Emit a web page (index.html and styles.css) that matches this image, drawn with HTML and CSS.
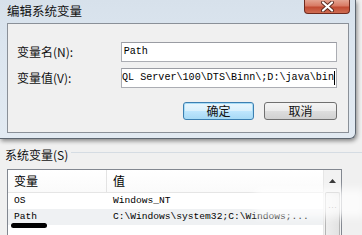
FILE: index.html
```html
<!DOCTYPE html>
<html>
<head>
<meta charset="utf-8">
<link rel="stylesheet" href="styles.css">
</head>
<body>
<div class="dialog">
  <div class="titlebar">
    <span class="title">编辑系统变量</span>
    <span class="close">
      <svg width="15" height="11" viewBox="0 0 15 11"><path d="M3 1.5 L12 9.5 M12 1.5 L3 9.5" stroke="#5a2a20" stroke-width="4" stroke-linecap="round"/><path d="M3 1.5 L12 9.5 M12 1.5 L3 9.5" stroke="#ffffff" stroke-width="2.2" stroke-linecap="round"/></svg>
    </span>
  </div>
  <div class="panel">
    <div class="row">
      <span class="label">变量名(N):</span>
      <div class="input"><span class="val">Path</span></div>
    </div>
    <div class="row">
      <span class="label">变量值(V):</span>
      <div class="input scrolled"><span class="val">QL Server\100\DTS\Binn\;D:\java\bin</span><i class="caret"></i></div>
    </div>
    <div class="buttons">
      <span class="btn primary">确定</span>
      <span class="btn">取消</span>
    </div>
  </div>
</div>
<div class="section">
  <div class="legend"><span class="legend-text">系统变量(S)</span><span class="rule"></span></div>
  <div class="list">
    <div class="list-body">
      <div class="lrow header"><span class="c1">变量</span><span class="c2">值</span></div>
      <div class="lrow"><span class="c1 mono">OS</span><span class="c2 mono">Windows_NT</span></div>
      <div class="lrow alt"><span class="c1 mono">Path</span><span class="c2 mono">C:\Windows\system32;C:\Windows;...</span></div>
    </div>
    <div class="scrollbar">
      <div class="arrow"><svg width="7" height="4" viewBox="0 0 7 4"><path d="M0 4 L3.5 0 L7 4 Z" fill="#333"/></svg></div>
      <div class="thumb"><span class="grip">···</span></div>
    </div>
  </div>
  <span class="redact"></span>
  <span class="smudge"></span>
</div>
</body>
</html>
```
FILE: styles.css
```css
html, body {
  margin: 0;
  padding: 0;
}
body {
  width: 362px;
  height: 235px;
  overflow: hidden;
  background: #f0f0f0;
  font-family: "Noto Sans CJK SC", "Liberation Sans", sans-serif;
  color: #000;
}
.dialog {
  width: 356px;
  box-sizing: border-box;
  padding: 0 6px 5px 7px;
  background: linear-gradient(180deg, #d7e1eb 0%, #dbe5ef 30%, #e2eaf2 100%);
  border-bottom-right-radius: 6px;
  border-right: 1px solid #5d6670;
  border-bottom: 1px solid #5d6670;
  box-shadow: 1px 2px 4px rgba(0,0,0,0.45);
  position: relative;
}
.titlebar {
  height: 23px;
  display: flex;
  align-items: flex-start;
}
.title {
  font-size: 12.5px;
  line-height: 17px;
  padding-top: 2px;
  color: #111;
}
.close {
  margin-left: auto;
  margin-right: -1px;
  width: 46px;
  height: 14px;
  box-sizing: border-box;
  border: 1px solid #6e2a1e;
  border-top: none;
  border-radius: 0 0 4px 4px;
  background: linear-gradient(180deg, #e4a391 0%, #d87a64 45%, #c14a32 55%, #cf6d52 100%);
  display: flex;
  align-items: center;
  justify-content: center;
}
.panel {
  height: 110px;
  box-sizing: border-box;
  border: 1px solid #8a9098;
  background: #f0f0f0;
  padding: 18px 11px 0 9px;
  display: flex;
  flex-direction: column;
}
.row {
  display: flex;
  align-items: center;
  height: 20px;
  margin-bottom: 6px;
}
.label {
  width: 104px;
  font-size: 12px;
  line-height: 16px;
  color: #111;
}
.input {
  width: 217px;
  height: 20px;
  box-sizing: border-box;
  border: 1px solid #abadb3;
  border-top-color: #9a9ca3;
  background: #fff;
  display: flex;
  align-items: center;
  overflow: hidden;
  font-family: "Liberation Mono", monospace;
  font-size: 10.1px;
  padding-left: 2px;
}
.input .val {
  white-space: nowrap;
  line-height: 14px;
}
.input.scrolled {
  justify-content: flex-end;
  padding-left: 0;
  padding-right: 1px;
}
.caret {
  display: block;
  width: 1px;
  height: 14px;
  background: #000;
  flex: none;
}
.buttons {
  display: flex;
  justify-content: flex-end;
  gap: 10px;
  margin-top: 8px;
}
.btn {
  height: 18px;
  box-sizing: border-box;
  border: 1px solid #707070;
  border-radius: 3px;
  background: linear-gradient(180deg, #f4f4f4 0%, #ebebeb 48%, #dddddd 52%, #d1d1d1 100%);
  font-size: 12px;
  line-height: 16px;
  text-align: center;
  width: 73px;
  color: #111;
}
.btn.primary {
  width: 71px;
  border-color: #3c7fb1;
  background: linear-gradient(180deg, #eaf6fd 0%, #d9f0fc 48%, #bee6fd 52%, #a7d9f5 100%);
  box-shadow: inset 0 0 0 1px #a8dcf6;
}
.section {
  position: relative;
  padding-top: 8px;
}
.legend {
  display: flex;
  align-items: flex-start;
  padding-left: 5px;
  height: 22px;
}
.legend-text {
  font-size: 12px;
  line-height: 16px;
  color: #111;
}
.rule {
  flex: 1;
  height: 1px;
  margin-top: 5px;
  margin-left: 3px;
  background: #d5dce3;
}
.list {
  margin-left: 7px;
  width: 335px;
  height: 68px;
  box-sizing: border-box;
  border: 1px solid #828790;
  border-bottom: none;
  background: #fff;
  display: flex;
}
.list-body {
  flex: 1;
}
.lrow {
  display: grid;
  grid-template-columns: 99px 1fr;
  height: 16px;
  align-items: center;
}
.lrow.header {
  height: 22px;
  border-bottom: 1px solid #e5e5e5;
  background: linear-gradient(180deg, #ffffff 0%, #fafafa 100%);
}
.lrow.header .c1 {
  border-right: 1px solid #e3e3e3;
  height: 22px;
  box-sizing: border-box;
}
.lrow.header span {
  font-size: 12px;
  line-height: 22px;
}
.lrow .c1, .lrow .c2 {
  padding-left: 6px;
  white-space: nowrap;
  overflow: hidden;
}
.mono {
  font-family: "Liberation Mono", monospace;
  font-size: 9.6px;
  line-height: 16px;
}
.lrow.alt {
  background: #eff1f3;
}
.scrollbar {
  width: 17px;
  background: #f2f2f2;
  border-left: 1px solid #e6e6e6;
  display: flex;
  flex-direction: column;
  align-items: center;
}
.arrow {
  height: 22px;
  width: 100%;
  display: flex;
  align-items: center;
  justify-content: center;
}
.thumb {
  flex: 1;
  width: 15px;
  box-sizing: border-box;
  border: 1px solid #b4b4b4;
  border-bottom: none;
  border-radius: 2px 2px 0 0;
  background: linear-gradient(90deg, #eeeeee, #e2e2e2);
  display: flex;
  justify-content: center;
  padding-top: 10px;
}
.grip {
  font-size: 9px;
  line-height: 8px;
  color: #555;
  font-family: "Liberation Sans", sans-serif;
}
.redact {
  position: absolute;
  left: 11px;
  top: 84px;
  width: 36px;
  height: 5px;
  border-radius: 3px;
  background: #000;
}
.smudge {
  position: absolute;
  left: 255px;
  top: 50px;
  width: 110px;
  height: 28px;
  background: rgba(255,255,255,0.75);
  filter: blur(4px);
}
```
